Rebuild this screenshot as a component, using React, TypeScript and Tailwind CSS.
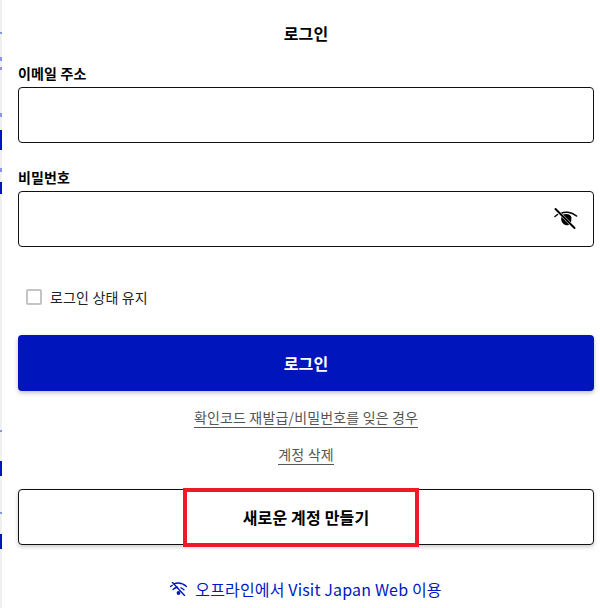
import React from 'react';

const font = { fontFamily: '"Noto Sans CJK KR", "Noto Sans", sans-serif' };

const EyeOffIcon: React.FC = () => (
  <svg width="24" height="24" viewBox="0 0 24 24" fill="none">
    <path d="M7 6.500C10.500 4.500 17 4.500 22.500 9" stroke="#000" strokeWidth="1.600" strokeLinecap="round" />
    <path d="M1 9.500 3.500 7.500" stroke="#000" strokeWidth="1.500" strokeLinecap="round" />
    <path d="M7.500 9.500C8 7.800 10 7 12.500 7c2.500 0 4.500 1.500 5 3.500l-.5 5-2.500 2.500c-3 1-6-1-7-4-.4-1.200-.4-2.500 0-4.500Z" fill="#000" />
    <path d="M1.500 2 20.500 21" stroke="#fff" strokeWidth="2.800" strokeLinecap="round" />
    <path d="M1.500 2 20.500 21" stroke="#000" strokeWidth="2" strokeLinecap="round" />
  </svg>
);

const WifiOffIcon: React.FC = () => (
  <svg width="17" height="14" viewBox="0 0 17 14" fill="none" stroke="#0018c0">
    <path d="M4 1.800C7.500 .5 12.500 1 16.500 4.500" strokeWidth="1.400" strokeLinecap="round" />
    <path d="M.5 4.500C1 4 1.500 3.700 2.200 3.300" strokeWidth="1.400" strokeLinecap="round" />
    <path d="M3 7.500C4.500 6 6 5.500 7.500 5.300M11 5.800c1 .4 2 1 3 2" strokeWidth="1.400" strokeLinecap="round" />
    <path d="M2.500 .5 14.500 13.500" strokeWidth="1.400" strokeLinecap="round" />
    <circle cx="8.500" cy="11" r="1.900" fill="#0018c0" stroke="none" />
  </svg>
);

const Field: React.FC<{ label: string; children?: React.ReactNode }> = ({ label, children }) => (
  <div>
    <label className="block text-[14px] leading-[20px] font-bold text-black">{label}</label>
    <div className="mt-[4px] h-[56px] rounded-[4px] border border-[#111] bg-white flex items-center justify-end pr-[15px]">
      {children}
    </div>
  </div>
);

// sliver of the page behind the dialog
const EdgeStrip: React.FC = () => (
  <div className="w-[2px] h-full bg-[#f0f0f0] flex flex-col shrink-0">
    <div className="mt-[32px] h-[2px] bg-[#8a94e6]" />
    <div className="mt-[23px] h-[4px] bg-[#8a94e6]" />
    <div className="mt-[6px] h-[3px] bg-[#8a94e6]" />
    <div className="mt-[43px] h-[4px] bg-[#8a94e6]" />
    <div className="mt-[13px] h-[20px] bg-[#0015bc]" />
    <div className="mt-[18px] h-[4px] bg-[#8a94e6]" />
    <div className="mt-[10px] h-[12px] bg-[#0015bc]" />
    <div className="mt-[236px] h-[2px] bg-[#8a94e6]" />
    <div className="mt-[29px] h-[15px] bg-[#0015bc]" />
    <div className="mt-[36px] h-[2px] bg-[#8a94e6]" />
    <div className="mt-[20px] h-[15px] bg-[#0015bc]" />
  </div>
);

export default function App() {
  return (
    <div className="w-[600px] h-[608px] bg-white flex overflow-hidden tracking-[0.16px]" style={font}>
      <EdgeStrip />
      <div className="flex-1 pl-[16px] pr-[6px]">
        <h1 className="mt-[23px] text-center text-[16px] leading-[20px] font-bold text-black">로그인</h1>

        <div className="mt-[20px]">
          <Field label="이메일 주소" />
        </div>
        <div className="mt-[24px]">
          <Field label="비밀번호">
            <EyeOffIcon />
          </Field>
        </div>

        <label className="mt-[40px] ml-[8px] flex items-center gap-[8px]">
          <span className="w-[16px] h-[16px] rounded-[2px] border-2 border-[#c4c4c4] bg-white" />
          <span className="text-[14px] leading-[20px] text-[#222]">로그인 상태 유지</span>
        </label>

        <button className="mt-[28px] w-full h-[56px] rounded-[4px] bg-[#0015bc] text-white text-[16px] font-bold shadow-[0_2px_4px_rgba(0,0,0,0.25)]">
          로그인
        </button>

        <div className="mt-[16px] flex flex-col items-center gap-[16px] text-[14px] leading-[20px] text-[#555]">
          <a className="border-b border-[#555]">확인코드 재발급/비밀번호를 잊은 경우</a>
          <a className="border-b border-[#555]">계정 삭제</a>
        </div>

        <div className="relative mt-[24px]">
          <button className="w-full h-[56px] rounded-[4px] border border-[#111] bg-white text-black text-[16px] font-bold shadow-[0_2px_4px_rgba(0,0,0,0.2)]">
            새로운 계정 만들기
          </button>
          <div className="absolute left-[165px] top-[-1px] w-[236px] h-[59px] border-4 border-[#ed1c24]" />
        </div>

        <div className="mt-[33px] flex items-center justify-center gap-[8px] text-[16px] leading-[22px] text-[#0018c0]">
          <WifiOffIcon />
          <span>오프라인에서 Visit Japan Web 이용</span>
        </div>
      </div>
    </div>
  );
}
